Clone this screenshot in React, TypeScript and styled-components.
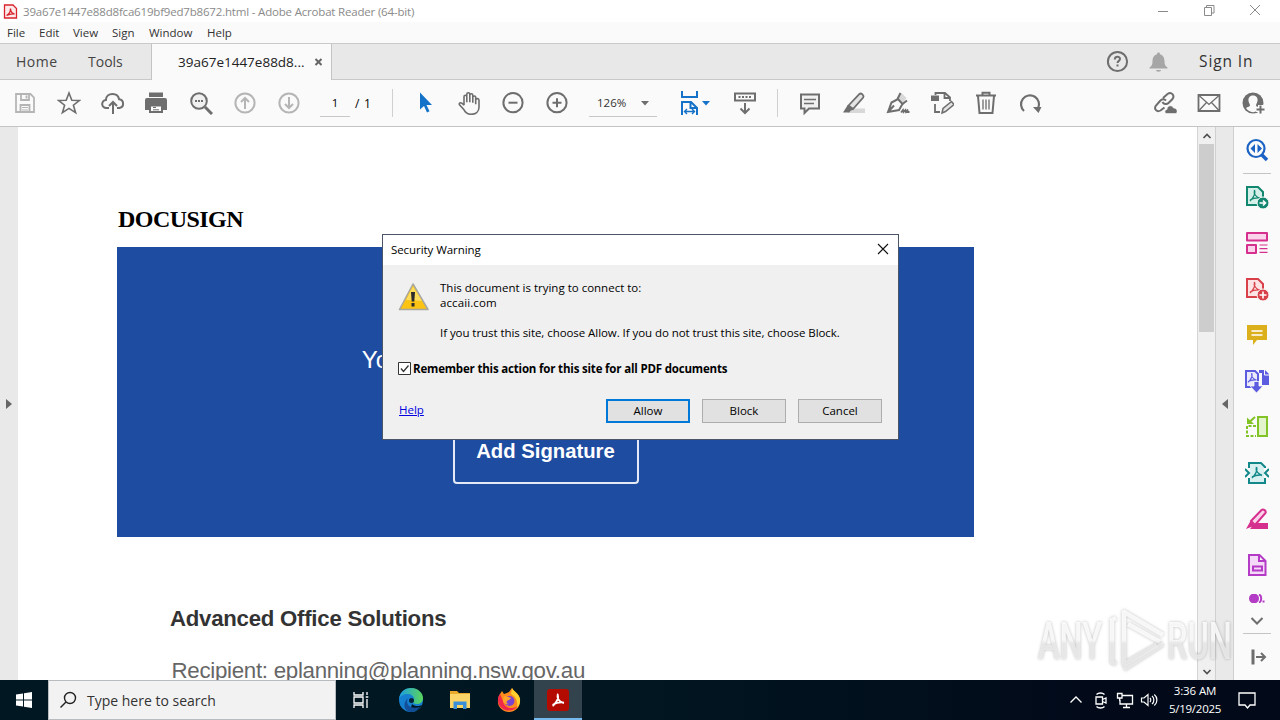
import React from 'react';
import styled, { createGlobalStyle } from 'styled-components';

const GlobalStyle = createGlobalStyle`
  * {
    box-sizing: border-box;
  }
  body {
    margin: 0;
    overflow: hidden;
    font-family: 'Open Sans', 'Noto Sans', sans-serif;
  }
`;

const Screen = styled.div`
  position: relative;
  display: flex;
  flex-direction: column;
  width: 1280px;
  height: 720px;
  background: #fff;
`;

interface TextProps {
  $size?: number;
  $spacing?: number;
  $color?: string;
  $weight?: number;
}

const Text = styled.span<TextProps>`
  font-size: ${({ $size = 11.5 }) => `${$size}px`};
  letter-spacing: ${({ $spacing = 0 }) => `${$spacing}px`};
  color: ${({ $color = '#000' }) => $color};
  font-weight: ${({ $weight = 400 }) => $weight};
  white-space: pre;
`;

const Spacer = styled.div`
  flex: 1;
`;

/* window chrome */

const TitleBar = styled.div`
  display: flex;
  align-items: center;
  height: 22px;
  padding: 0 17px 0 3px;
  background: #fff;
  line-height: 22px;
`;

const TitleText = styled(Text)`
  margin-left: 5px;
  padding-top: 1px;
`;

const WindowButtons = styled.div`
  display: flex;
  gap: 30px;
  padding-bottom: 2px;
`;

const MenuBar = styled.div`
  display: flex;
  height: 22px;
  padding-left: 7px;
  background: #fafafa;
  border-bottom: 1px solid #c9c9c9;
  line-height: 21px;
`;

const MenuItem = styled(Text)<{ $width: number }>`
  width: ${({ $width }) => `${$width}px`};
`;

const TabBar = styled.div`
  display: flex;
  height: 36px;
  background: #e8e8e8;
  border-bottom: 1px solid #c9c9c9;
  line-height: 35px;
`;

const TabLink = styled.div<{ $width: number; $indent: number }>`
  width: ${({ $width }) => `${$width}px`};
  padding-left: ${({ $indent }) => `${$indent}px`};
`;

const ActiveTab = styled.div`
  display: flex;
  align-items: center;
  width: 181px;
  height: 36px;
  padding-left: 26px;
  background: #fafafa;
  border-left: 1px solid #c4c4c4;
  border-right: 1px solid #c4c4c4;
`;

const TabText = styled.div`
  width: 136px;
`;

const TabActions = styled.div`
  display: flex;
  align-items: center;
  width: 175px;
`;

const TabIcon = styled.div<{ $width: number }>`
  display: flex;
  width: ${({ $width }) => `${$width}px`};
`;

/* toolbar */

const Toolbar = styled.div`
  display: flex;
  align-items: center;
  height: 47px;
  padding-left: 3px;
  padding-right: 5px;
  background: #fafafa;
  border-bottom: 1px solid #c4c4c4;
`;

const ToolCell = styled.div<{ $width?: number }>`
  display: flex;
  justify-content: center;
  width: ${({ $width = 44 }) => `${$width}px`};
`;

const FitCell = styled.div`
  display: flex;
  align-items: center;
  width: 72px;
  padding-left: 20px;
  gap: 1px;
`;

const Divider = styled.div<{ $left: number; $right: number }>`
  width: 1px;
  height: 28px;
  margin: 0 ${({ $right }) => `${$right}px`} 0 ${({ $left }) => `${$left}px`};
  background: #d0d0d0;
`;

const Field = styled.div<{ $width: number; $left: number }>`
  display: flex;
  align-items: center;
  width: ${({ $width }) => `${$width}px`};
  height: 28px;
  margin-left: ${({ $left }) => `${$left}px`};
  border-bottom: 1px solid #c8c8c8;
`;

const PageNumber = styled(Text)`
  width: 30px;
  text-align: center;
`;

const PageTotal = styled(Text)`
  width: 37px;
  padding-left: 5px;
`;

const ZoomValue = styled(Text)`
  width: 52px;
  padding-left: 8px;
`;

/* document area */

const Body = styled.div`
  display: flex;
  height: 553px;
`;

const Rail = styled.div<{ $side: 'left' | 'right' }>`
  display: flex;
  align-items: center;
  justify-content: center;
  width: ${({ $side }) => ($side === 'right' ? '19px' : '18px')};
  background: #e9e9e9;
  ${({ $side }) => $side === 'right' && 'border-left: 1px solid #d0d0d0; border-right: 1px solid #d0d0d0;'}
`;

const Page = styled.div`
  width: 1179px;
  padding: 75px 0 0 100px;
  overflow: hidden;
  background: #fff;
`;

const DocTitle = styled.h1`
  margin: 0;
  height: 45px;
  font: bold 24px/34px 'Liberation Serif', serif;
  letter-spacing: -0.55px;
  color: #000;
`;

const Banner = styled.div`
  display: flex;
  flex-direction: column;
  align-items: center;
  width: 857px;
  height: 290px;
  margin-left: -1px;
  padding-top: 97px;
  background: #1e4ca1;
  font-family: 'Liberation Sans', sans-serif;
  color: #fff;
`;

const BannerText = styled.div`
  height: 75px;
  font-size: 24px;
  line-height: 32px;
`;

const SignButton = styled.div`
  width: 186px;
  height: 65px;
  border: 2px solid #e4eaf5;
  border-radius: 4px;
  font-size: 20.3px;
  font-weight: bold;
  line-height: 60px;
  text-align: center;
`;

const Sender = styled.div`
  height: 54px;
  margin: 66px 0 0 52px;
  font: bold 22.2px/32px 'Liberation Sans', sans-serif;
  letter-spacing: -0.24px;
  color: #333;
`;

const Recipient = styled.div`
  margin-left: 53.5px;
  font: 22.3px/28px 'Liberation Sans', sans-serif;
  letter-spacing: -0.29px;
  color: #666;
`;

const Scrollbar = styled.div`
  display: flex;
  flex-direction: column;
  width: 18px;
  padding: 0 1px;
  background: #f0f0f0;
  border-left: 1px solid #d4d4d4;
`;

const ScrollButton = styled.div`
  display: flex;
  align-items: center;
  justify-content: center;
  height: 17px;
`;

const Thumb = styled.div`
  height: 188px;
  background: #cdcdcd;
`;

const ToolsPane = styled.div`
  display: flex;
  flex-direction: column;
  align-items: center;
  width: 46px;
  background: #fafafa;
`;

const PaneCell = styled.div<{ $height?: number }>`
  display: flex;
  align-items: center;
  justify-content: center;
  height: ${({ $height = 46 }) => `${$height}px`};
  overflow: hidden;
`;

const PaneLine = styled.div`
  width: 28px;
  height: 1px;
  background: #c4c4c4;
`;

/* dialog */

const Dialog = styled.div`
  position: absolute;
  left: 382px;
  top: 234px;
  width: 517px;
  height: 206px;
  background: #f0f0f0;
  border: 1px solid #4a5568;
`;

const DialogTitle = styled.div`
  display: flex;
  align-items: center;
  justify-content: space-between;
  height: 30px;
  padding: 0 9px 2px 8px;
  background: #fff;
`;

const DialogMessage = styled.div`
  display: flex;
  height: 96px;
  padding: 15px 0 0 15px;
`;

const MessageText = styled.div`
  display: flex;
  flex-direction: column;
  padding-left: 10px;
  line-height: 15px;
`;

const CheckRow = styled.div`
  display: flex;
  align-items: center;
  height: 14px;
  padding-left: 15px;
  gap: 2px;
`;

const DialogFooter = styled.div`
  display: flex;
  align-items: center;
  gap: 12px;
  height: 24px;
  margin-top: 24px;
  padding: 0 16px;
`;

const HelpLink = styled(Text)`
  text-decoration: underline;
  padding-bottom: 3px;
`;

const Button = styled.button<{ $primary?: boolean }>`
  width: 84px;
  height: 24px;
  padding: 0 0 2px;
  background: #e1e1e1;
  border: ${({ $primary }) => ($primary ? '2px solid #0078d7' : '1px solid #adadad')};
  font-family: inherit;
  line-height: 18px;
`;

/* taskbar */

const Taskbar = styled.div`
  display: flex;
  align-items: center;
  height: 40px;
  background: linear-gradient(90deg, #011822 0%, #011621 50%, #020a1a 85%, #020919 100%);
`;

const TaskCell = styled.div<{ $width?: number; $active?: boolean }>`
  display: flex;
  align-items: center;
  justify-content: center;
  width: ${({ $width = 49 }) => `${$width}px`};
  height: 40px;
  ${({ $active }) => $active && 'background: #33434d; box-shadow: inset 0 -2px #76b9ed;'}
`;

const SearchBox = styled.div`
  display: flex;
  align-items: center;
  width: 288px;
  height: 40px;
  padding-left: 10px;
  gap: 10px;
  background: #f2f2f2;
  border: 1px solid #b8bcbe;
`;

const Clock = styled.div`
  display: flex;
  flex-direction: column;
  align-items: center;
  width: 66px;
  padding-left: 2px;
  line-height: 18px;
`;

const Watermark = styled.svg`
  position: absolute;
  left: 1030px;
  top: 600px;
  filter: drop-shadow(0 0 1.5px rgba(0, 0, 0, 0.3));
`;

interface GlyphProps {
  size?: number;
  color?: string;
  width?: number;
  children: React.ReactNode;
}

const Glyph = ({ size = 24, color = '#6e6e6e', width = 2, children }: GlyphProps) => (
  <svg width={size} height={size} viewBox={`0 0 ${size} ${size}`} fill="none" stroke={color} strokeWidth={width}>
    {children}
  </svg>
);

const menus = [
  { label: 'File', width: 32 },
  { label: 'Edit', width: 34 },
  { label: 'View', width: 39 },
  { label: 'Sign', width: 37 },
  { label: 'Window', width: 58 },
  { label: 'Help', width: 40 },
];

const acrobatMark = 'M11.500 6c1 2.500-.5 7-4.500 11 M11.500 6c-.8 3 1 6.500 5.500 8.500 M7 16c2.500-1.500 6-2.300 10-2';

const fileTools = [
  <Glyph color="#b5b5b5" width={1.8}>
    <path d="M3 3h14.500L21 6.500V21H3z M8 3v6h8V3 M7.500 21v-7h9v7 M13.500 4.500v3" />
    <path d="M9 16.500h6 M9 19h6" strokeWidth="1" />
  </Glyph>,
  <Glyph width={1.6}>
    <path d="M12 2l2.800 7.300 7.700.2-6.100 4.700 2.200 7.500L12 17.400l-6.600 4.300 2.200-7.500L1.500 9.500l7.700-.2z" />
  </Glyph>,
  <Glyph>
    <path d="M8 17H5.500a4 4 0 0 1-.6-8C5 5 8 3 11.500 3c3.300 0 6 2 6.600 5.300A4.400 4.400 0 0 1 18.500 17H16" />
    <path d="M12 23V11 M8 15l4-4 4 4" />
  </Glyph>,
  <Glyph>
    <g transform="translate(-1 0)">
      <path d="M5 1.500h14V6H5z M3 7h18a2 2 0 0 1 2 2v10h-4v-4H5v4H1V9a2 2 0 0 1 2-2z" fill="#6e6e6e" stroke="none" />
      <path d="M6 14.500h12V21H6z" fill="#fff" />
      <path d="M9 16.500h3 M9 18.800h6" strokeWidth="1" />
    </g>
  </Glyph>,
  <Glyph>
    <circle cx="10" cy="10" r="7.800" fill="#f0f0f0" />
    <path d="M16 16l7 7" strokeWidth="3" />
    <path d="M6 10h2 M9 10h2 M12 10h2" strokeWidth="1.800" />
  </Glyph>,
  <Glyph color="#b5b5b5">
    <circle cx="12" cy="12" r="9.600" />
    <path d="M12 18V7 M8 11l4-4 4 4" />
  </Glyph>,
  <Glyph color="#b5b5b5">
    <circle cx="12" cy="12" r="9.600" />
    <path d="M12 6v11 M8 13l4 4 4-4" />
  </Glyph>,
];

const viewTools = [
  <Glyph>
    <path d="M7 1.500v17l4-3.500 3 6.500 2.500-1.200-3-6.300H19z" fill="#1473c8" stroke="none" />
  </Glyph>,
  <Glyph width={1.600}>
    <path d="M6.500 14V5.500c0-2 2.800-2 2.800 0V11 M9.300 5V3c0-2 3-2 3 0v8 M12.300 4c0-2 3-2 3 0v7.500 M15.300 6c0-1.800 2.900-1.800 2.900 0v7 M18.200 8.500c.3-1.800 3.300-1.500 3.300.5v7c0 4-3 7-8 7-3.500 0-5.500-1.800-7-4.500l-4.500-5c-1-1.700 1.200-2.700 2.500-1.500l2 2" transform="translate(.5 .3)" />
  </Glyph>,
  <Glyph>
    <circle cx="12" cy="11.700" r="9.600" />
    <path d="M7.500 11.700h9" />
  </Glyph>,
  <Glyph>
    <circle cx="12" cy="11.700" r="9.600" />
    <path d="M7.500 11.700h9 M12 7.200v9" />
  </Glyph>,
];

const editTools = [
  <Glyph>
    <path d="M3 3.500h18v14H11l-4.500 4.500v-4.500H3z" fill="#f1f1f1" />
    <path d="M6 8.500h12 M6 12.500h10" strokeWidth="1.300" />
  </Glyph>,
  <Glyph width={1.800}>
    <path d="M8 17.500h15V22H6z" fill="#d8d8d8" stroke="none" />
    <path d="M6.500 14.500L17.500 3c1.500-1.500 5 1.500 3.700 3.500L11 18z" fill="#e4e4e4" />
    <path d="M5.800 14l5.500 4.500-3 1.500-1 1.500H1z" fill="#6e6e6e" stroke="none" />
  </Glyph>,
  <Glyph width={2}>
    <path d="M12 7l3.500-5 5 5-3.500 5z" fill="#d8d8d8" stroke="none" />
    <path d="M2 21l3.500-9.500L12 8l4.500 5-3.500 6z M2 21l6-6.500" />
    <path d="M11.500 8l3-6 M16.500 13l4.500-3.500" />
    <path d="M15 21.500l2-2.500.5 2 2-2 .5 2 1.500-1.500.5 1.500h1.500" strokeWidth="1.800" />
  </Glyph>,
  <Glyph width={1.800}>
    <path d="M5.500 4V2h9.500l5 4.500V10 M14.500 2v5H20 M5 13v8h5" />
    <path d="M1 4.500h8V10H1z" fill="#6e6e6e" stroke="none" />
    <path d="M12 22l1-4.500 8.500-7 2.500 3-8.500 7z" fill="#e4e4e4" strokeWidth="1.500" />
  </Glyph>,
  <Glyph>
    <path d="M2 4.500h20 M8.500 4V1.800h7V4 M4 5l1.500 17h13L20 5" />
    <path d="M9 8.500v10 M12 8.500v10 M15 8.500v10" strokeWidth="1.300" />
  </Glyph>,
  <Glyph width={2.200}>
    <path d="M6 20A9 9 0 1 1 20 17.500" />
    <path d="M15 16h8.500l-3 6z" fill="#6e6e6e" stroke="none" />
  </Glyph>,
];

const shareTools = [
  <Glyph>
    <path d="M10 7l4.500-4c4-3 7.500 1.500 5 5l-4 4c-2 2-5 1-6-1 M13 9.500c-2-2-4-1.500-6 .5l-4 4.500c-2.500 3.500 1 7 4.500 5l4-3" />
    <path d="M13 22.500c-2-1-1-4 1-4 0-4 5-5 6.500-1.500 4 0 4.500 4.500 2.500 5.500z" fill="#6e6e6e" stroke="#fafafa" strokeWidth=".6" />
  </Glyph>,
  <Glyph width={1.800}>
    <path d="M1.500 4h21v16h-21z" />
    <path d="M2 4.500l10 9 10-9 M2 19.500l7.500-8 M22 19.500l-7.500-8" strokeWidth="1.300" />
  </Glyph>,
  <Glyph>
    <circle cx="12" cy="12" r="10.500" fill="#6e6e6e" stroke="none" />
    <path d="M12 4.500c3.500 0 5 2.500 4.500 5.500-.3 2-1.500 3-1.500 4.500 0 1 2.500 1.500 4 2.500-3 5.500-11 5.500-14 0 1.500-1 4-1.500 4-2.500 0-1.500-1.200-2.500-1.500-4.500-.5-3 1-5.500 4.500-5.500z" fill="#fafafa" stroke="none" />
    <path d="M15 18.500h9 M19.500 14v9" stroke="#fafafa" strokeWidth="5" />
    <path d="M15.500 18.500h8 M19.500 14.500v8" />
  </Glyph>,
];

const paneTools = [
  <Glyph color="#12866f">
    <path d="M2 2h11l5 5v13H2z" fill="#d5efe9" />
    <path d={acrobatMark} strokeWidth="1.300" transform="translate(-2 -1)" />
    <circle cx="18" cy="18" r="6" fill="#12866f" stroke="#fafafa" strokeWidth="1" />
    <path d="M14.500 18h6 M18 15.500l2.500 2.500-2.500 2.500" stroke="#fff" strokeWidth="1.600" />
  </Glyph>,
  <Glyph color="#d6308f">
    <path d="M2 2h20v7.500H2z M2 14h9v8H2z" fill="#fbd3ea" strokeLinejoin="round" />
    <path d="M14.500 14h8 M14.500 17.700h8 M14.500 21.400h8" strokeWidth="1.200" />
  </Glyph>,
  <Glyph color="#d8404a">
    <path d="M2 2h11l5 5v13H2z" fill="#fde3e3" />
    <path d={acrobatMark} strokeWidth="1.300" transform="translate(-2 -1)" />
    <circle cx="18" cy="18" r="6" fill="#d8404a" stroke="#fafafa" strokeWidth="1" />
    <path d="M14.500 18h7 M18 14.500v7" stroke="#fff" strokeWidth="1.600" />
  </Glyph>,
  <Glyph>
    <path d="M2 2h20v15H12l-4 5v-5H2z" fill="#dcb01c" stroke="none" />
    <path d="M6.500 8h11 M6.500 12h11" stroke="#fff" strokeWidth="1.500" />
  </Glyph>,
  <Glyph color="#5c5ce0">
    <path d="M14 1h6l4 4v11h-7V4h-3z" fill="#5c5ce0" stroke="none" />
    <path d="M19.500 1v5H24" stroke="#fafafa" strokeWidth="1" />
    <path d="M9 18H1V2h9l3 3v8" fill="#ebebfc" />
    <path d={acrobatMark} strokeWidth="1.300" transform="translate(-3 -1) scale(.85)" />
    <path d="M9 12.500h5V17h4l-6.500 7L5 17h4z" fill="#5c5ce0" stroke="#fafafa" strokeWidth=".8" />
  </Glyph>,
  <Glyph color="#82c326">
    <path d="M13 2h9v19h-9z" fill="#e3f4cd" />
    <path d="M11 11H2v10h9" strokeDasharray="3 1.500" />
    <path d="M10 2L5 6.500" />
    <path d="M2 2.500v6.500h7z" fill="#82c326" stroke="none" />
  </Glyph>,
  <Glyph color="#12888a">
    <path d="M5 3h10.500L19 6v15H5z" fill="#d8f0f0" stroke="none" />
    <path d="M4 7V2h12l4 4v1 M4 17v5h16v-5" />
    <path d="M0 8l4 4-4 4 M24 8l-4 4 4 4" />
    <path d={acrobatMark} strokeWidth="1.500" />
  </Glyph>,
  <Glyph color="#d6308f">
    <path d="M10 16h13v6H5z M1 22l4.500-8 4.500 4.500z" fill="#d6308f" stroke="none" />
    <path d="M6 14L16.500 3c2-1.500 5 .8 4 3L10 18z" fill="#fbd3ea" />
  </Glyph>,
  <Glyph color="#b43bc5">
    <path d="M4 2h10.500L20.500 8v14H4z M14 2v6h6" fill="#f4d9f8" />
    <path d="M8 13.500h9v4H8z" />
  </Glyph>,
];

const App = () => (
  <Screen>
    <GlobalStyle />
    <TitleBar>
      <Glyph size={15} color="#d8232a" width={1.300}>
        <path d="M1.500 1h8.500l3.500 3.500V14h-12z" fill="#fdeaea" />
        <path d="M3.500 11.500c3-1.500 4-5 4-7 0 3 2 5 4 5.500-3-.3-5.500.3-8 1.500z" />
      </Glyph>
      <TitleText $spacing={-0.185} $color="#8a8a8a">
        39a67e1447e88d8fca619bf9ed7b8672.html - Adobe Acrobat Reader (64-bit)
      </TitleText>
      <Spacer />
      <WindowButtons>
        <Glyph size={16} color="#8a8a8a" width={1}>
          <path d="M3 9.500h10" />
        </Glyph>
        <Glyph size={16} color="#8a8a8a" width={1}>
          <path d="M3.500 5.500h7v8h-7z M5.500 5V3.500h7.500V11H11" />
        </Glyph>
        <Glyph size={16} color="#8a8a8a" width={1}>
          <path d="M3 3l10 10 M13 3L3 13" />
        </Glyph>
      </WindowButtons>
    </TitleBar>
    <MenuBar>
      {menus.map((m) => (
        <MenuItem key={m.label} $width={m.width} $color="#333">
          {m.label}
        </MenuItem>
      ))}
    </MenuBar>
    <TabBar>
      <TabLink $width={72} $indent={16}>
        <Text $size={14} $spacing={0.5} $color="#444">Home</Text>
      </TabLink>
      <TabLink $width={79} $indent={16}>
        <Text $size={14} $color="#444">Tools</Text>
      </TabLink>
      <ActiveTab>
        <TabText>
          <Text $size={13.500} $color="#222">39a67e1447e88d8...</Text>
        </TabText>
        <Glyph size={9} color="#666">
          <path d="M1.500 1l6 6 M7.500 1l-6 6" />
        </Glyph>
      </ActiveTab>
      <Spacer />
      <TabActions>
        <TabIcon $width={43}>
          <Glyph>
            <circle cx="12.500" cy="11.500" r="9.600" />
            <path d="M9.800 9.500c0-3.500 5.200-3.500 5.200-.5 0 1.800-2.500 2-2.500 4 M12.500 14.500v2" />
          </Glyph>
        </TabIcon>
        <TabIcon $width={51}>
          <Glyph size={22} color="#a6a6a6">
            <path d="M10.500 1.500c1 0 1.500.7 1.500 1.700 3.500 1 4.500 4 4.500 7.300 0 3.500 1 4.500 3 6v1h-18v-1c2-1.500 3-2.500 3-6 0-3.300 1-6.300 4.500-7.300 0-1 .5-1.700 1.500-1.700z M8 19h5c0 2.300-5 2.300-5 0z" fill="#a6a6a6" stroke="none" />
          </Glyph>
        </TabIcon>
        <Text $size={15.500} $spacing={0.9} $color="#333">Sign In</Text>
      </TabActions>
    </TabBar>
    <Toolbar>
      {fileTools.map((icon, index) => (
        <ToolCell key={index}>{icon}</ToolCell>
      ))}
      <Field $width={30} $left={9}>
        <PageNumber>1</PageNumber>
      </Field>
      <PageTotal $size={12} $spacing={0.8}>/ 1</PageTotal>
      <Divider $left={5} $right={10} />
      {viewTools.map((icon, index) => (
        <ToolCell key={index}>{icon}</ToolCell>
      ))}
      <Field $width={68} $left={10}>
        <ZoomValue $color="#333">126%</ZoomValue>
        <Glyph size={8}>
          <path d="M0 2h8L4 6.500z" fill="#6e6e6e" stroke="none" />
        </Glyph>
      </Field>
      <FitCell>
        <Glyph color="#1473c8">
          <path d="M5 0v6h15V0 M5 24V11h9l6 6v7 M13.500 11v6H20" />
          <path d="M7.500 20.500h10 M10 18l-2.500 2.500L10 23 M15 18l2.500 2.500L15 23" strokeWidth="1.400" />
        </Glyph>
        <Glyph size={8}>
          <path d="M0 2h8L4 6.500z" fill="#1473c8" stroke="none" />
        </Glyph>
      </FitCell>
      <ToolCell $width={32}>
        <Glyph>
          <path d="M2 2.500h20v7H2z M12 12v10 M7.500 17.500L12 22l4.500-4.500" />
          <path d="M5.500 6h13" strokeDasharray="2 1.500" />
        </Glyph>
      </ToolCell>
      <Divider $left={16} $right={10} />
      {editTools.map((icon, index) => (
        <ToolCell key={index}>{icon}</ToolCell>
      ))}
      <Spacer />
      {shareTools.map((icon, index) => (
        <ToolCell key={index}>{icon}</ToolCell>
      ))}
    </Toolbar>
    <Body>
      <Rail $side="left">
        <Glyph size={10}>
          <path d="M2 0l6 5-6 5z" fill="#666" stroke="none" />
        </Glyph>
      </Rail>
      <Page>
        <DocTitle>DOCUSIGN</DocTitle>
        <Banner>
          <BannerText>Your document is ready for review.</BannerText>
          <SignButton>Add Signature</SignButton>
        </Banner>
        <Sender>Advanced Office Solutions</Sender>
        <Recipient>Recipient: eplanning@planning.nsw.gov.au</Recipient>
      </Page>
      <Scrollbar>
        <ScrollButton>
          <Glyph size={10} color="#505050" width={1.700}>
            <path d="M1.500 7L5 3.500 8.500 7" />
          </Glyph>
        </ScrollButton>
        <Thumb />
        <Spacer />
        <ScrollButton>
          <Glyph size={10} color="#505050" width={1.700}>
            <path d="M1.500 3L5 6.500 8.500 3" />
          </Glyph>
        </ScrollButton>
      </Scrollbar>
      <Rail $side="right">
        <Glyph size={10}>
          <path d="M8 0L2 5l6 5z" fill="#666" stroke="none" />
        </Glyph>
      </Rail>
      <ToolsPane>
        <PaneCell>
          <Glyph color="#1b62c4" width={2.200}>
            <circle cx="11" cy="10.500" r="8.500" />
            <path d="M17 17l5 5" strokeWidth="3.500" />
            <path d="M10 6v9l-4.500-4.500z M12.500 6v9l4.500-4.500z" fill="#1b62c4" stroke="none" />
          </Glyph>
        </PaneCell>
        <PaneLine />
        {paneTools.map((icon, index) => (
          <PaneCell key={index}>{icon}</PaneCell>
        ))}
        <PaneCell $height={21}>
          <svg width="18" height="9" viewBox="0 0 18 9" fill="none" stroke="#b43bc5" strokeWidth="2">
            <circle cx="6" cy="4.500" r="5" fill="#b43bc5" stroke="none" />
            <path d="M11 .5c3 1 3 7 0 8 M14.500 7.500h2" />
          </svg>
        </PaneCell>
        <PaneCell $height={24}>
          <Glyph size={14}>
            <path d="M1.500 4L7 9.500 12.500 4" />
          </Glyph>
        </PaneCell>
        <PaneLine />
        <PaneCell>
          <Glyph size={20}>
            <path d="M6 2.500v15" strokeWidth="3" />
            <path d="M9 10h9 M14 6l4 4-4 4" />
          </Glyph>
        </PaneCell>
      </ToolsPane>
    </Body>
    <Taskbar>
      <TaskCell $width={48}>
        <Glyph size={18}>
          <path d="M1 3.500l7-1V8.500H1z M9 2.300L17 1v7.500H9z M1 9.500h7v6l-7-1z M9 9.500h8V17l-8-1.300z" fill="#fff" stroke="none" />
        </Glyph>
      </TaskCell>
      <SearchBox>
        <Glyph size={18} color="#222" width={1.400}>
          <circle cx="11" cy="7" r="5.500" />
          <path d="M7 11l-5.500 5.500" />
        </Glyph>
        <Text $size={14} $color="#333">Type here to search</Text>
      </SearchBox>
      <TaskCell>
        <Glyph size={18} color="#fff" width={1.300}>
          <path d="M2 1v3h9V1 M2 6h9v6H2z M2 17v-3h9v3 M15 1v3 M15 8v9 M13.700 6h2.600" />
        </Glyph>
      </TaskCell>
      <TaskCell $width={51}>
        <svg width="26" height="26" viewBox="0 0 26 26">
          <defs>
            <linearGradient id="edgeTop" x1="0" x2="1">
              <stop offset="0" stopColor="#1b9de2" />
              <stop offset="1" stopColor="#5bd65a" />
            </linearGradient>
          </defs>
          <circle cx="13" cy="13" r="12" fill="#1680d0" />
          <path d="M14 17c3 3 8 2 10 1-3 6-9 7-12 6z" fill="#011722" />
          <path d="M1 12C2 4 8 1 13 1c7 0 12 5 12 10 0 4-3 6-6 6s-4-1-4-2c0-1 1-1.500 1-3 0-3-3-5-6.500-5S2 9 1 12z" fill="url(#edgeTop)" />
          <path d="M10 11c-3 6 2 12 12 9-3 4-7 5-10 5-6-1-8-9-2-14z" fill="#134f99" />
          <circle cx="13.500" cy="13.500" r="2.500" fill="#012338" />
        </svg>
      </TaskCell>
      <TaskCell $width={48}>
        <svg width="22" height="22" viewBox="0 0 22 22">
          <path d="M1 2h7l2 2h11v15H1z" fill="#e9a92b" />
          <path d="M1 5h20v14H1z" fill="#fbd568" />
          <path d="M4.500 20v-7.500h13V20H14v-4H8v4z" fill="#3b8fd9" />
        </svg>
      </TaskCell>
      <TaskCell $width={50}>
        <svg width="24" height="26" viewBox="0 0 24 26">
          <path d="M3 7l2-3 2 3c2-1 4-1 5-2l3-4c1 3 7 5 8 11 1 8-5 13-11 13S0 20 1 13c0-3 1-4 2-6z" fill="#ff8a1e" />
          <path d="M15 1c1 3 7 5 8 11 .5 4-1 7-3 9 1-7-1-11-6-14z" fill="#ffd02e" />
          <path d="M1 14c1 10 14 13 20 5-6 4-14 2-15-5l-3-7c-2 2-2 5-2 7z" fill="#f0294b" />
          <circle cx="12.500" cy="14" r="5" fill="#7a44d0" />
          <path d="M7 9c3 0 4 1 7 2-1 2-3 2-4 3-1 1 0 3 2 3-4 1-6-2-6-4z" fill="#ffa52a" />
        </svg>
      </TaskCell>
      <TaskCell $width={48} $active>
        <svg width="22" height="22" viewBox="0 0 22 22">
          <rect width="22" height="22" rx="3" fill="#b30b00" />
          <path d={acrobatMark} fill="none" stroke="#fff" strokeWidth="1.800" strokeLinecap="round" transform="translate(-.8 -.5)" />
        </svg>
      </TaskCell>
      <Spacer />
      <TaskCell $width={22}>
        <Glyph size={14} color="#fff" width={1.300}>
          <path d="M1.500 9.500L7 4l5.500 5.500" />
        </Glyph>
      </TaskCell>
      <TaskCell $width={27}>
        <Glyph size={18} color="#fff" width={1.300}>
          <path d="M4 6h6.500v7H4z M10.500 8.500L14 7v5l-3.500-1.500 M4.500 3.500c2-2 6-2 8 0 M4.500 15.500c2 2 6 2 8 0" />
        </Glyph>
      </TaskCell>
      <TaskCell $width={22}>
        <Glyph size={18} color="#fff" width={1.300}>
          <path d="M6 4.500h10.500V13H4V9 M7 16.500h7 M10.500 13v3 M1.500 2.500h4.500V7H1.500z M3.700 7v3" />
        </Glyph>
      </TaskCell>
      <TaskCell $width={25}>
        <Glyph size={18} color="#fff" width={1.200}>
          <path d="M1.500 7v4H4l4 3.500V3.500L4 7z M10 7c1 1 1 3 0 4 M12 5c2.500 2 2.500 6 0 8 M14.300 3.500c3.500 3 3.500 8 0 11" />
        </Glyph>
      </TaskCell>
      <Clock>
        <Text $spacing={-0.1} $color="#fff">3:36 AM</Text>
        <Text $spacing={-0.25} $color="#fff">5/19/2025</Text>
      </Clock>
      <TaskCell $width={40}>
        <Glyph size={20} color="#fff" width={1.300}>
          <path d="M2 3h16v12h-5l-2.500 3L8 15H2z" />
        </Glyph>
      </TaskCell>
      <TaskCell $width={13} />
    </Taskbar>

    <Dialog>
      <DialogTitle>
        <Text $spacing={-0.07}>Security Warning</Text>
        <Glyph size={12} color="#111" width={1.100}>
          <path d="M1 1l10 10 M11 1L1 11" />
        </Glyph>
      </DialogTitle>
      <DialogMessage>
        <svg width="32" height="32" viewBox="0 0 32 32">
          <path d="M15 4L1.500 29.500h28.500z" fill="#fbc313" stroke="#a8a8a0" strokeWidth="1.500" strokeLinejoin="round" />
          <path d="M15 6.500L8 20l16 1z" fill="#fddc5c" />
          <path d="M13 12h4l-.7 9.500h-2.600z M13.500 23h3v3.500h-3z" fill="#2b2b2b" />
        </svg>
        <MessageText>
          <Text>This document is trying to connect to:</Text>
          <Text $spacing={0.1}>accaii.com</Text>
          <Text> </Text>
          <Text $spacing={-0.06}>If you trust this site, choose Allow. If you do not trust this site, choose Block.</Text>
        </MessageText>
      </DialogMessage>
      <CheckRow>
        <Glyph size={13} color="#333" width={1}>
          <path d="M.5.500h12v12H.5z" fill="#fff" />
          <path d="M3 6.500L5.500 9.500 10.500 3.500" strokeWidth="1.300" />
        </Glyph>
        <Text $weight={700} $spacing={-0.18}>Remember this action for this site for all PDF documents</Text>
      </CheckRow>
      <DialogFooter>
        <HelpLink $color="#0000e0">Help</HelpLink>
        <Spacer />
        <Button $primary><Text>Allow</Text></Button>
        <Button><Text>Block</Text></Button>
        <Button><Text>Cancel</Text></Button>
      </DialogFooter>
    </Dialog>

    <Watermark width="210" height="80" viewBox="0 0 210 80">
      <defs>
        <linearGradient id="mark" x1="0" y1="10" x2="0" y2="70" gradientUnits="userSpaceOnUse">
          <stop offset="0.5" stopColor="#fff" stopOpacity="0.85" />
          <stop offset="0.56" stopColor="#ececec" stopOpacity="0.85" />
        </linearGradient>
      </defs>
      <g fill="url(#mark)" fontFamily="Roboto, sans-serif" fontSize="51" fontWeight="500">
        <text x="8" y="59" textLength="64" lengthAdjust="spacingAndGlyphs">ANY</text>
        <text x="137" y="59" textLength="65" lengthAdjust="spacingAndGlyphs">RUN</text>
      </g>
      <g fill="none" stroke="url(#mark)" strokeWidth="4.500">
        <path d="M86 18l-4 2v42l4 2" />
        <path d="M127 45L94 64V12l39 23" strokeLinejoin="round" />
        <path d="M98 24l32 18 M133 44L94 69" />
      </g>
    </Watermark>
  </Screen>
);

export default App;
